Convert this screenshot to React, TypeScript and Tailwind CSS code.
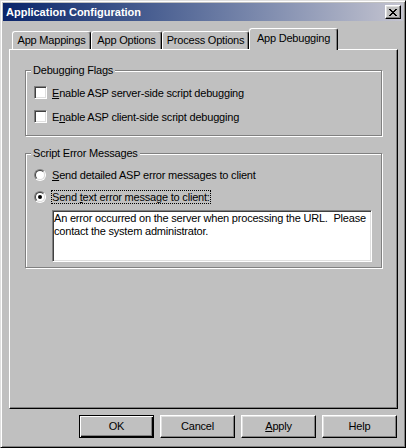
import React from 'react';

const raised =
  'border border-t-white border-l-white border-r-black border-b-black shadow-[inset_-1px_-1px_0_#808080,inset_1px_1px_0_#dfdfdf]';

const tabs = [
  { label: 'App Mappings', width: 'w-[79px]' },
  { label: 'App Options', width: 'w-[71px]' },
  { label: 'Process Options', width: 'w-[87px]' },
  { label: 'App Debugging', width: 'w-[89px]', active: true },
];

function CloseGlyph() {
  // classic 8x7 close cross
  const rows = ['11000011', '01100110', '00111100', '00011000', '00111100', '01100110', '11000011'];
  return (
    <svg width="8" height="7" viewBox="0 0 8 7" shapeRendering="crispEdges">
      {rows.map((r, y) =>
        r.split('').map((c, x) => (c === '1' ? <rect key={`${x}-${y}`} x={x} y={y} width="1" height="1" fill="#000" /> : null))
      )}
    </svg>
  );
}

function Checkbox() {
  return (
    <span className="w-[13px] h-[13px] shrink-0 bg-white border border-t-[#808080] border-l-[#808080] border-r-white border-b-white shadow-[inset_1px_1px_0_#404040,inset_-1px_-1px_0_#dfdfdf]" />
  );
}

function Radio({ checked }: { checked?: boolean }) {
  return (
    <span className="w-[12px] h-[12px] shrink-0 rounded-full border border-t-[#808080] border-l-[#808080] border-r-white border-b-white">
      <span className="flex items-center justify-center w-full h-full rounded-full bg-white border border-t-[#404040] border-l-[#404040] border-r-[#dfdfdf] border-b-[#dfdfdf]">
        {checked && <span className="w-[4px] h-[4px] rounded-full bg-black" />}
      </span>
    </span>
  );
}

function Button({ children, isDefault }: { children: React.ReactNode; isDefault?: boolean }) {
  return (
    <button
      className={
        isDefault
          ? 'w-[75px] h-[23px] bg-[#c0c0c0] border border-black shadow-[inset_1px_1px_0_#fff,inset_-1px_-1px_0_#000,inset_-2px_-2px_0_#808080] text-[11px] leading-[13px]'
          : 'w-[75px] h-[23px] bg-[#c0c0c0] border border-t-white border-l-white border-r-black border-b-black shadow-[inset_-1px_-1px_0_#808080,inset_1px_1px_0_#dfdfdf] text-[11px] leading-[13px]'
      }
    >
      {children}
    </button>
  );
}

export default function App() {
  return (
    <div className="w-[406px] h-[448px] bg-[#c0c0c0] border border-t-[#dfdfdf] border-l-[#dfdfdf] border-r-black border-b-black shadow-[inset_1px_1px_0_#fff,inset_-1px_-1px_0_#808080] p-[2px] flex flex-col text-black text-[11px] tracking-[-0.2px] font-['Liberation_Sans',Arial,sans-serif]">
      {/* Title bar */}
      <div className="h-[18px] shrink-0 bg-linear-to-r from-[#0a246a] to-[#c4c4d0] flex items-center justify-between pl-[3px] pr-[2px]">
        <span className="text-white font-bold text-[11px] leading-[13px] tracking-normal">Application Configuration</span>
        <span className={`w-[16px] h-[14px] bg-[#c0c0c0] flex items-center justify-center ${raised}`}>
          <CloseGlyph />
        </span>
      </div>

      {/* Tabs */}
      <div className="mt-[7px] ml-[9px] h-[21px] flex items-end">
        {tabs.map((t) => (
          <div
            key={t.label}
            className={
              t.active
                ? `${t.width} h-[22px] -mb-px relative z-10 bg-[#c0c0c0] border-t border-x border-t-white border-l-white border-r-black shadow-[inset_-1px_0_0_#808080] rounded-t-[3px] flex justify-center pt-[3px] leading-[13px]`
                : `${t.width} h-[18px] border-t border-x border-t-white border-l-white border-r-black shadow-[inset_-1px_0_0_#808080] rounded-t-[3px] flex justify-center pt-[2px] leading-[13px]`
            }
          >
            {t.label}
          </div>
        ))}
      </div>

      {/* Panel */}
      <div className="ml-[6px] w-[389px] h-[360px] shrink-0 border border-t-white border-l-white border-r-black border-b-black shadow-[inset_-1px_-1px_0_#808080] pl-[15px] pt-[14px]">
        <fieldset className="w-[357px] border border-[#808080] shadow-[1px_1px_0_#fff,inset_1px_1px_0_#fff] px-[5px] pb-[12px]">
          <legend className="px-[2px] leading-[13px] bg-[#c0c0c0]">Debugging Flags</legend>
          <div className="ml-[3px] mt-[9px] flex flex-col gap-[11px]">
            <label className="flex items-center h-[13px]">
              <Checkbox />
              <span className="ml-[4px] border border-transparent leading-[12px]">
                <span className="underline">E</span>nable ASP server-side script debugging
              </span>
            </label>
            <label className="flex items-center h-[13px]">
              <Checkbox />
              <span className="ml-[4px] border border-transparent leading-[12px]">
                E<span className="underline">n</span>able ASP client-side script debugging
              </span>
            </label>
          </div>
        </fieldset>

        <fieldset className="mt-[11px] w-[357px] border border-[#808080] shadow-[1px_1px_0_#fff,inset_1px_1px_0_#fff] px-[5px] pb-[5px]">
          <legend className="px-[2px] leading-[13px] bg-[#c0c0c0]">Script Error Messages</legend>
          <div className="ml-[3px] mt-[8px] flex flex-col">
            <label className="flex items-center h-[13px]">
              <Radio />
              <span className="ml-[5px] border border-transparent leading-[12px]">
                <span className="underline">S</span>end detailed ASP error messages to client
              </span>
            </label>
            <label className="flex items-center h-[13px] mt-[9px]">
              <Radio checked />
              <span className="ml-[5px] border border-dotted border-black leading-[12px]">
                Send <span className="underline">t</span>ext error message to client:
              </span>
            </label>
            <div className="mt-[7px] ml-[18px] w-[320px] h-[52px] bg-white border border-t-[#808080] border-l-[#808080] border-r-white border-b-white shadow-[inset_1px_1px_0_#404040,inset_-1px_-1px_0_#dfdfdf] pl-[1px] pt-[1px] leading-[13px] whitespace-pre overflow-hidden">
              {'An error occurred on the server when processing the URL.  Please\ncontact the system administrator.'}
            </div>
          </div>
        </fieldset>
      </div>

      {/* Buttons */}
      <div className="mt-[6px] pr-[6px] flex justify-end gap-[6px]">
        <Button isDefault>OK</Button>
        <Button>Cancel</Button>
        <Button>
          <span className="underline">A</span>pply
        </Button>
        <Button>Help</Button>
      </div>
    </div>
  );
}
